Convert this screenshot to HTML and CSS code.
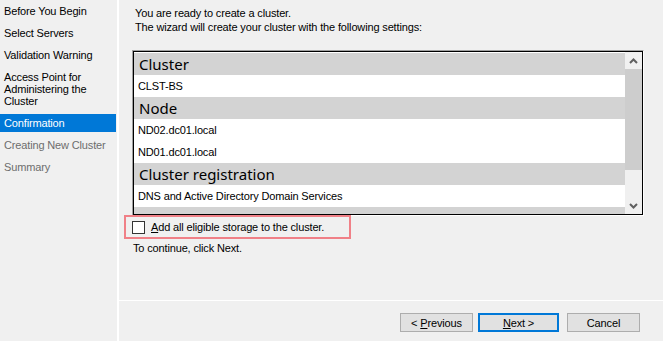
FILE: index.html
```html
<!DOCTYPE html>
<html lang="en">
<head>
  <meta charset="UTF-8">
  <title>Create Cluster Wizard - Confirmation</title>
  <link rel="stylesheet" href="styles.css">
</head>
<body>

  <div class="wizard">
    <ul class="steps">
      <li>Before You Begin</li>
      <li>Select Servers</li>
      <li>Validation Warning</li>
      <li class="multi">Access Point for Administering the Cluster</li>
      <li class="current">Confirmation</li>
      <li class="pending">Creating New Cluster</li>
      <li class="pending">Summary</li>
    </ul>

    <div class="main">
      <div class="content">
        <p class="intro">You are ready to create a cluster.<br>The wizard will create your cluster with the following settings:</p>

        <div class="listbox">
          <div class="listbox-inner">
            <div class="rows">
              <div class="row heading">Cluster</div>
              <div class="row">CLST-BS</div>
              <div class="row heading">Node</div>
              <div class="row">ND02.dc01.local</div>
              <div class="row">ND01.dc01.local</div>
              <div class="row heading">Cluster registration</div>
              <div class="row">DNS and Active Directory Domain Services</div>
              <div class="row heading"></div>
            </div>
            <div class="scrollbar">
              <div class="arrow">
                <svg width="9" height="6" viewBox="0 0 9 6"><polyline points="1,5 4.5,1.5 8,5" fill="none" stroke="#606060" stroke-width="2"/></svg>
              </div>
              <div class="thumb"></div>
              <div class="track"></div>
              <div class="arrow">
                <svg width="9" height="6" viewBox="0 0 9 6"><polyline points="1,1 4.5,4.5 8,1" fill="none" stroke="#606060" stroke-width="2"/></svg>
              </div>
            </div>
          </div>
        </div>

        <label class="storage">
          <span class="checkbox"></span>
          <span><u>A</u>dd all eligible storage to the cluster.</span>
        </label>

        <p class="hint">To continue, click Next.</p>
      </div>

      <div class="footer">
        <button class="btn">&lt; <u>P</u>revious</button>
        <button class="btn btn-default"><u>N</u>ext &gt;</button>
        <button class="btn btn-cancel">Cancel</button>
      </div>
    </div>
  </div>

</body>
</html>
```

FILE: styles.css
```css
html, body {
  margin: 0;
  height: 100%;
}

body {
  font-family: "Liberation Sans", Arial, sans-serif;
  font-size: 11px;
  letter-spacing: -0.15px;
  color: #000;
  background-color: #f0f0f0;
}

.wizard {
  display: flex;
  height: 341px;
  overflow: hidden;
}

/* left step list */
.steps {
  list-style: none;
  margin: 0;
  padding: 2px 0 0 0;
  width: 117px;
  flex-shrink: 0;
  border-right: 2px solid #fff;
}

.steps li {
  margin: 0 1px 4px 0;
  padding: 2.5px 4px;
  line-height: 13px;
}

.steps li.multi {
  line-height: 12px;
  padding-bottom: 3.5px;
}

.steps li.current {
  background-color: #0078d7;
  color: #fff;
}

.steps li.pending {
  color: #6d6d6d;
}

/* right side */
.main {
  flex: 1;
  display: flex;
  flex-direction: column;
}

.content {
  flex: 1;
  padding-left: 13px;
}

.intro {
  margin: 6px 0 0 3px;
  line-height: 14px;
}

.listbox {
  margin-top: 16px;
  width: 510px;
  border: 1px solid;
  border-color: #a0a0a0 #fff #fff #a0a0a0;
}

.listbox-inner {
  display: flex;
  height: 162px;
  border: 1px solid #000;
  background-color: #fff;
  overflow: hidden;
}

.rows {
  flex: 1;
  padding-top: 1px;
}

.row {
  height: 22px;
  line-height: 22px;
  padding-left: 4px;
  white-space: nowrap;
}

.row.heading {
  background-color: #d3d3d3;
  font-family: "Noto Sans", "Liberation Sans", sans-serif;
  font-size: 15px;
  letter-spacing: 0;
  line-height: 23px;
  padding-left: 5px;
}

.scrollbar {
  width: 17px;
  display: flex;
  flex-direction: column;
  background-color: #f0f0f0;
}

.arrow {
  height: 17px;
  display: flex;
  align-items: center;
  justify-content: center;
}

.thumb {
  height: 101px;
  background-color: #cdcdcd;
}

.track {
  flex: 1;
}

/* checkbox row, marked with a red frame */
.storage {
  display: flex;
  align-items: center;
  gap: 6px;
  width: 217px;
  height: 20px;
  margin: -1px 0 0 -8px;
  padding-left: 6px;
  border: 2px solid #f08087;
}

.checkbox {
  width: 11px;
  height: 11px;
  border: 1px solid #333;
  background-color: #fff;
}

.hint {
  margin: 2px 0 0 1px;
  line-height: 14px;
}

/* button bar */
.footer {
  display: flex;
  height: 41px;
  padding: 12px 0 0 281px;
  border-top: 1px solid #fff;
  box-sizing: border-box;
  margin-top: auto;
}

.btn {
  font-family: "Liberation Sans", Arial, sans-serif;
  font-size: 11px;
  letter-spacing: -0.15px;
  height: 19px;
  width: 73px;
  padding: 0;
  background-color: #e1e1e1;
  border: 1px solid #adadad;
  color: #000;
}

.btn-default {
  width: 81px;
  margin-left: 5px;
  border: 2px solid #0078d7;
}

.btn-cancel {
  margin-left: 8px;
}
```
